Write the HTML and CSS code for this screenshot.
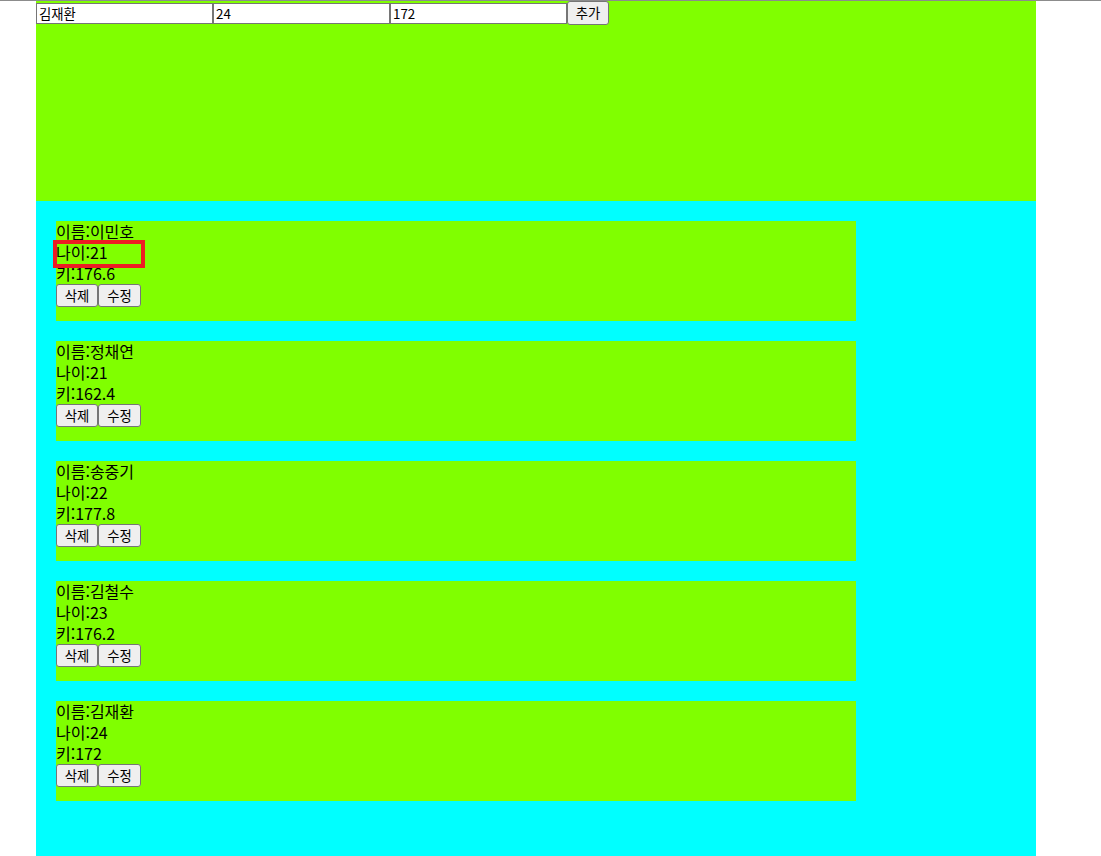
FILE: index.html
```html
<!DOCTYPE html>
<html lang="ko">
<head>
<meta charset="utf-8">
<title>회원 목록</title>
<link rel="stylesheet" href="styles.css">
</head>
<body>
<div class="wrap">
  <div class="header">
    <div class="form">
      <input class="field" type="text" value="김재환">
      <input class="field" type="text" value="24">
      <input class="field" type="text" value="172">
      <button class="btn btn-add">추가</button>
    </div>
  </div>
  <div class="list">
    <div class="card">
      <div class="line">이름:이민호</div>
      <div class="line">나이:21</div>
      <div class="line">키:176.6</div>
      <div class="actions"><button class="btn btn-del">삭제</button><button class="btn btn-edit">수정</button></div>
      <div class="highlight"></div>
    </div>
    <div class="card">
      <div class="line">이름:정채연</div>
      <div class="line">나이:21</div>
      <div class="line">키:162.4</div>
      <div class="actions"><button class="btn btn-del">삭제</button><button class="btn btn-edit">수정</button></div>
    </div>
    <div class="card">
      <div class="line">이름:송중기</div>
      <div class="line">나이:22</div>
      <div class="line">키:177.8</div>
      <div class="actions"><button class="btn btn-del">삭제</button><button class="btn btn-edit">수정</button></div>
    </div>
    <div class="card">
      <div class="line">이름:김철수</div>
      <div class="line">나이:23</div>
      <div class="line">키:176.2</div>
      <div class="actions"><button class="btn btn-del">삭제</button><button class="btn btn-edit">수정</button></div>
    </div>
    <div class="card">
      <div class="line">이름:김재환</div>
      <div class="line">나이:24</div>
      <div class="line">키:172</div>
      <div class="actions"><button class="btn btn-del">삭제</button><button class="btn btn-edit">수정</button></div>
    </div>
  </div>
</div>
</body>
</html>
```
FILE: styles.css
```css
html, body {
  margin: 0;
  padding: 0;
  background: #ffffff;
}
body {
  border-top: 1px solid #8c8c8c;
  font-family: "Noto Sans CJK KR", "Noto Sans", sans-serif;
  color: #000;
}
.wrap {
  margin-left: 36px;
  width: 1000px;
}
.header {
  height: 200px;
  background: #80ff00;
}
.form {
  display: flex;
  align-items: center;
  height: 24px;
}
.field {
  box-sizing: border-box;
  width: 177px;
  height: 21px;
  margin: 0;
  padding: 0 2px;
  border: 1px solid #767676;
  background: #fff;
  font-family: "Noto Sans CJK KR", sans-serif;
  font-size: 13.33px;
  line-height: 19px;
  color: #000;
  outline: none;
}
.btn {
  box-sizing: border-box;
  margin: 0;
  padding: 0;
  border: 1px solid #767676;
  border-radius: 3px;
  background: #efefef;
  font-family: "Noto Sans CJK KR", sans-serif;
  font-size: 13.33px;
  line-height: 1;
  color: #000;
}
.btn-add {
  width: 42px;
  height: 24px;
}
.list {
  box-sizing: border-box;
  min-height: 660px;
  padding: 20px;
  background: #00ffff;
}
.card {
  position: relative;
  box-sizing: border-box;
  width: 800px;
  height: 100px;
  margin-bottom: 20px;
  background: #80ff00;
  font-size: 16px;
  line-height: 21px;
}
.line {
  height: 21px;
}
.actions {
  display: flex;
}
.btn-del {
  width: 42px;
  height: 23px;
}
.btn-edit {
  width: 43px;
  height: 23px;
}
.highlight {
  position: absolute;
  left: -3px;
  top: 19px;
  box-sizing: border-box;
  width: 92px;
  height: 28px;
  border: 4px solid #ed1c24;
}
```
